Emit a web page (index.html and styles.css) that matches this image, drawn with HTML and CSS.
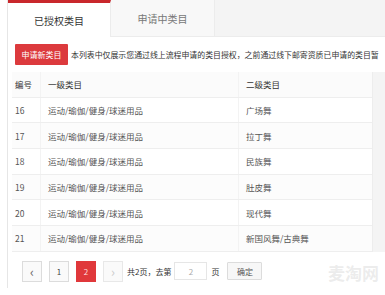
FILE: index.html
```html
<!DOCTYPE html>
<html lang="zh-CN">
<head>
    <meta charset="UTF-8">
    <title>类目管理</title>
    <link rel="stylesheet" href="styles.css">
</head>
<body>
    <div class="page">
        <div class="tabs">
            <div class="tab active">已授权类目</div>
            <div class="tab">申请中类目</div>
        </div>

        <div class="panel">
            <div class="notice">
                <button class="btn-red">申请新类目</button>
                <span class="notice-text">本列表中仅展示您通过线上流程申请的类目授权，之前通过线下邮寄资质已申请的类目暂</span>
            </div>

            <div class="table-wrap">
                <table class="cat-table">
                    <thead>
                        <tr>
                            <th class="col-no">编号</th>
                            <th class="col-first">一级类目</th>
                            <th class="col-second">二级类目</th>
                        </tr>
                    </thead>
                    <tbody>
                        <tr><td>16</td><td>运动/瑜伽/健身/球迷用品</td><td>广场舞</td></tr>
                        <tr><td>17</td><td>运动/瑜伽/健身/球迷用品</td><td>拉丁舞</td></tr>
                        <tr><td>18</td><td>运动/瑜伽/健身/球迷用品</td><td>民族舞</td></tr>
                        <tr><td>19</td><td>运动/瑜伽/健身/球迷用品</td><td>肚皮舞</td></tr>
                        <tr><td>20</td><td>运动/瑜伽/健身/球迷用品</td><td>现代舞</td></tr>
                        <tr><td>21</td><td>运动/瑜伽/健身/球迷用品</td><td>新国风舞/古典舞</td></tr>
                    </tbody>
                </table>
                <div class="table-side"></div>
            </div>

            <div class="pager">
                <span class="page-btn">&lsaquo;</span>
                <span class="page-btn">1</span>
                <span class="page-btn current">2</span>
                <span class="page-btn disabled">&rsaquo;</span>
                <span class="pager-text">共2页，去第</span>
                <input class="page-input" type="text" value="2">
                <span class="pager-text">页</span>
                <button class="btn-ok">确定</button>
            </div>
        </div>

        <div class="watermark">麦淘网</div>
    </div>
</body>
</html>
```

FILE: styles.css
```css
body {
    margin: 0;
    background: #fff;
    font-family: "Noto Sans CJK SC", "Noto Sans", sans-serif;
    color: #555;
    overflow: hidden;
}

.page {
    position: relative;
    margin-left: 7px;
    height: 288px;
    border-left: 1px solid #e6e6e6;
    background: #fff;
}

.tabs {
    display: flex;
    height: 37px;
    background: #f4f4f4;
    border-bottom: 1px solid #ececec;
    box-sizing: border-box;
}

.tab {
    width: 104px;
    display: flex;
    align-items: center;
    justify-content: center;
    font-size: 10px;
    color: #777;
    background: #f8f8f8;
    border-right: 1px solid #ececec;
    box-sizing: border-box;
}

.tab.active {
    width: 103px;
    color: #333;
    background: #fff;
    border-top: 3px solid #c9272c;
    margin-bottom: -1px;
}

.panel {
    padding: 7px 0 0 4px;
}

.notice {
    display: flex;
    align-items: center;
    white-space: nowrap;
    height: 21px;
}

.btn-red {
    flex-shrink: 0;
    height: 21px;
    width: 53px;
    margin-left: 3px;
    padding: 0;
    border: none;
    border-radius: 1px;
    background: #dc3a3d;
    color: #fff;
    font-family: inherit;
    font-size: 8px;
}

.notice-text {
    margin-left: 3px;
    font-size: 7.9px;
    color: #333;
}

.table-wrap {
    display: flex;
    margin-top: 7px;
}

.cat-table {
    width: 360px;
    border-collapse: collapse;
    font-size: 8.5px;
}

.cat-table th,
.cat-table td {
    height: 24.7px;
    padding: 0 0 0 7px;
    text-align: left;
    font-weight: normal;
    border-bottom: 1px solid #eeeeee;
    border-left: 1px solid #f3f3f3;
    white-space: nowrap;
}

.cat-table th {
    color: #333;
    background: #fbfbfb;
}

.cat-table th:first-child,
.cat-table td:first-child {
    border-left: none;
    padding-left: 3px;
}

.cat-table tbody tr:nth-child(even) td {
    background: #fcfcfc;
}

.col-no {
    width: 25px;
}

.col-first {
    width: 190px;
}

.table-side {
    flex: 1;
    background: #f4f4f4;
    border-left: 1px solid #ededed;
}

.pager {
    display: flex;
    align-items: center;
    gap: 7px;
    margin: 9px 0 0 10px;
    font-size: 8px;
}

.page-btn {
    width: 18px;
    height: 19px;
    display: flex;
    align-items: center;
    justify-content: center;
    border: 1px solid #dcdcdc;
    background: #fafafa;
    color: #444;
    font-size: 8px;
}

.page-btn:first-child {
    font-size: 13px;
    color: #666;
}

.page-btn.current {
    background: #e0383b;
    border-color: #e0383b;
    color: #fdd;
}

.page-btn.disabled {
    font-size: 13px;
    color: #ccc;
    border-color: #e8e8e8;
}

.pager-text {
    color: #333;
    margin-left: -3px;
}

.page-input {
    width: 31px;
    height: 16px;
    padding: 0;
    margin-left: -4px;
    border: 1px solid #e6e6e6;
    text-align: center;
    font-family: inherit;
    font-size: 8px;
    color: #aaa;
}

.btn-ok {
    width: 35px;
    height: 18px;
    margin-left: 1px;
    padding: 0;
    border: 1px solid #dcdcdc;
    border-radius: 1px;
    background: #f7f7f7;
    color: #555;
    font-family: inherit;
    font-size: 8px;
}

.watermark {
    position: absolute;
    right: 6px;
    bottom: 6px;
    font-size: 17px;
    font-weight: bold;
    line-height: 18px;
    color: rgba(200, 200, 200, 0.35);
}
```
